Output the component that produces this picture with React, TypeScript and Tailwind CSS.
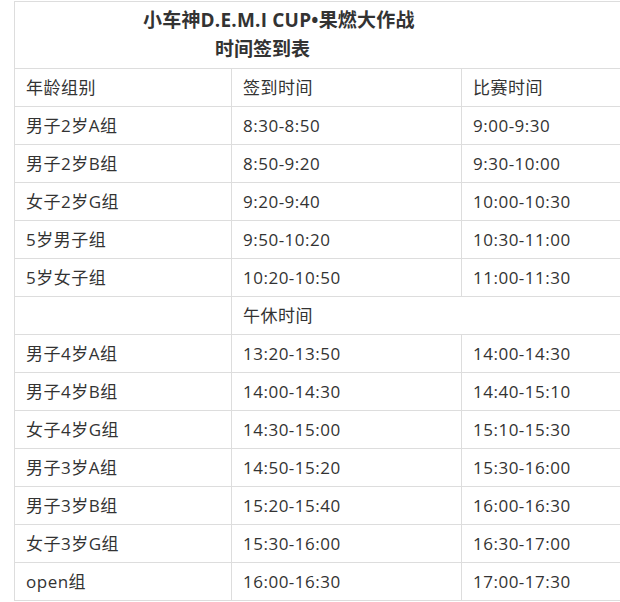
const ROWS: [string, string, string][] = [
  ["男子2岁A组", "8:30-8:50", "9:00-9:30"],
  ["男子2岁B组", "8:50-9:20", "9:30-10:00"],
  ["女子2岁G组", "9:20-9:40", "10:00-10:30"],
  ["5岁男子组", "9:50-10:20", "10:30-11:00"],
  ["5岁女子组", "10:20-10:50", "11:00-11:30"],
];

const ROWS_PM: [string, string, string][] = [
  ["男子4岁A组", "13:20-13:50", "14:00-14:30"],
  ["男子4岁B组", "14:00-14:30", "14:40-15:10"],
  ["女子4岁G组", "14:30-15:00", "15:10-15:30"],
  ["男子3岁A组", "14:50-15:20", "15:30-16:00"],
  ["男子3岁B组", "15:20-15:40", "16:00-16:30"],
  ["女子3岁G组", "15:30-16:00", "16:30-17:00"],
  ["open组", "16:00-16:30", "17:00-17:30"],
];

const cell = "border border-[#dddddd] h-[38px] px-[11px] align-middle text-left font-normal tracking-[0.5px]";

function Row({ r }: { r: [string, string, string] }) {
  return (
    <tr>
      <td className={cell}>{r[0]}</td>
      <td className={cell}>{r[1]}</td>
      <td className={cell}>{r[2]}</td>
    </tr>
  );
}

export default function App() {
  return (
    <div
      className="w-[620px] h-[602px] overflow-hidden bg-white pl-[14px] pt-[1px] text-[17px] text-[#333333]"
      style={{ fontFamily: '"Open Sans", "Noto Sans CJK SC", sans-serif' }}
    >
      <table className="border-collapse table-fixed w-[760px]">
        <colgroup>
          <col className="w-[217px]" />
          <col className="w-[230px]" />
          <col className="w-[313px]" />
        </colgroup>
        <tbody>
          <tr>
            <td colSpan={3} className="border border-[#dddddd] h-[67px] align-middle text-[19px] font-bold leading-[29px] text-[#333333]">
              <div className="pl-[128px] tracking-[0.2px]">小车神D.E.M.I CUP•果燃大作战</div>
              <div className="pl-[200px]">时间签到表</div>
            </td>
          </tr>
          <Row r={["年龄组别", "签到时间", "比赛时间"]} />
          {ROWS.map((r) => (
            <Row key={r[0]} r={r} />
          ))}
          <tr>
            <td className={cell}></td>
            <td colSpan={2} className={cell}>午休时间</td>
          </tr>
          {ROWS_PM.map((r) => (
            <Row key={r[0]} r={r} />
          ))}
        </tbody>
      </table>
    </div>
  );
}
